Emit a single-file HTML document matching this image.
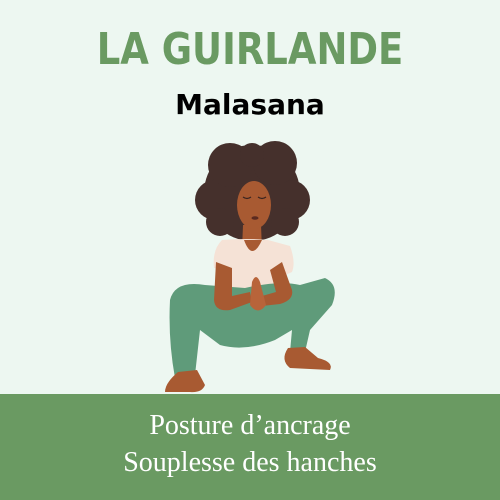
<!DOCTYPE html>
<html><head><style>
html,body{margin:0;padding:0}
body{width:500px;height:500px;background:#edf7f1;position:relative;overflow:hidden;font-family:"Liberation Sans",sans-serif}
.t{position:absolute;left:0;width:500px;text-align:center}
#h1{top:24px;font-size:44px;font-weight:900;color:#6a9a62;letter-spacing:0px;font-family:"DejaVu Sans","Liberation Sans",sans-serif;transform:scaleX(0.84)}
#h2{top:88px;font-size:28px;font-weight:bold;color:#000;font-family:"DejaVu Sans",sans-serif}
#band{position:absolute;left:0;top:394px;width:500px;height:106px;background:#6a9a62}
.b{color:#fff;font-family:"Liberation Serif",serif;font-size:28px}
</style></head><body>
<div class="t" id="h1">LA GUIRLANDE</div>
<div class="t" id="h2">Malasana</div>
<svg width="500" height="500" style="position:absolute;left:0;top:0">
<g fill="#45302c">
<circle cx="252" cy="193" r="48"/>
<circle cx="215" cy="200" r="20"/><circle cx="290" cy="200" r="20"/>
<circle cx="230" cy="165" r="22"/><circle cx="275" cy="163" r="22"/>
<circle cx="252" cy="155" r="12"/><circle cx="220" cy="222" r="14"/><circle cx="285" cy="222" r="14"/>
</g>
<path d="M243 225 L261 225 L262 250 L242 250Z" fill="#a85a32"/>
<ellipse cx="254" cy="205" rx="17" ry="24" fill="#a85a32"/>
<path d="M243 197q4 3 8 0M258 197q4 3 8 0" stroke="#3a2420" stroke-width="1.2" fill="none"/>
<ellipse cx="255" cy="218" rx="3.5" ry="1.8" fill="#5a2a20"/>
<path d="M222 240 Q248 238 268 240 L290 246 Q296 262 292 272 L283 276 L282 290 L228 292 L226 270 L214 268 Q212 250 222 240Z" fill="#f5e2d6"/>
<path d="M244 240 Q252 262 262 240Z" fill="#a85a32"/>
<path d="M170 300 Q175 280 205 285 L245 288 Q280 280 300 285 L325 278 Q340 285 332 305 L310 330 L305 352 L290 352 L292 330 L275 340 Q245 352 220 345 L200 330 L195 375 L175 378 Q168 340 170 300Z" fill="#5f9b7a"/>
<path d="M216 262 L214 300 Q215 312 230 310 L252 302 L250 292 L232 296 L232 268Z" fill="#a85a32"/>
<path d="M282 262 L292 290 Q294 300 280 304 L262 306 L262 296 L276 292 L270 270Z" fill="#a85a32"/>
<path d="M252 282 Q256 272 260 282 L266 305 Q258 316 250 305Z" fill="#b8643a"/>
<path d="M178 372 L197 370 L205 385 Q202 393 190 392 L165 392 Q165 383 178 372Z" fill="#a85a32"/>
<path d="M288 348 L305 347 L318 358 Q334 362 330 370 L290 368 Q280 360 288 348Z" fill="#a85a32"/>
</svg>
<div id="band"></div>
<div class="t b" style="top:410px">Posture d’ancrage</div>
<div class="t b" style="top:447px">Souplesse des hanches</div>
</body></html>
